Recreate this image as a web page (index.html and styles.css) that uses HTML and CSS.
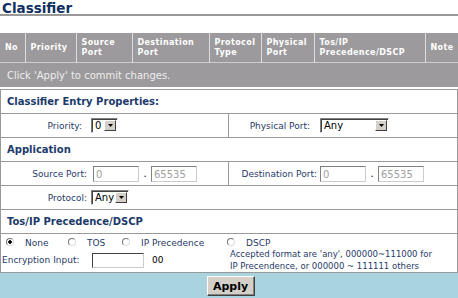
FILE: index.html
```html
<!DOCTYPE html>
<html lang="en">
<head>
    <meta charset="UTF-8">
    <title>Classifier</title>
    <link rel="stylesheet" href="styles.css">
</head>
<body>
    <h1 class="title">Classifier</h1>
    <table class="rules">
        <colgroup>
            <col style="width:25px"><col style="width:51px"><col style="width:56px"><col style="width:77px">
            <col style="width:52px"><col style="width:53px"><col style="width:111px"><col style="width:33px">
        </colgroup>
        <thead>
            <tr>
                <th>No</th>
                <th>Priority</th>
                <th>Source<br>Port</th>
                <th>Destination<br>Port</th>
                <th>Protocol<br>Type</th>
                <th>Physical<br>Port</th>
                <th>Tos/IP<br>Precedence/DSCP</th>
                <th>Note</th>
            </tr>
        </thead>
        <tbody>
            <tr><td colspan="8" class="hint">Click 'Apply' to commit changes.</td></tr>
        </tbody>
    </table>

    <div class="props">
        <div class="row head">Classifier Entry Properties:</div>
        <div class="row">
            <div class="half left">
                <span class="lbl lbl-pri">Priority:</span>
                <span class="select sel-pri"><span class="val">0</span><span class="arrow"><svg width="5" height="3" viewBox="0 0 5 3"><path d="M0 0H5L2.5 3Z" fill="#000"/></svg></span></span>
            </div>
            <div class="half">
                <span class="lbl lbl-phy">Physical Port:</span>
                <span class="select sel-phy"><span class="val">Any</span><span class="arrow"><svg width="5" height="3" viewBox="0 0 5 3"><path d="M0 0H5L2.5 3Z" fill="#000"/></svg></span></span>
            </div>
        </div>
        <div class="row head">Application</div>
        <div class="row">
            <div class="half left">
                <span class="lbl lbl-src">Source Port:</span>
                <span class="field off">0</span><span class="dot">.</span><span class="field off">65535</span>
            </div>
            <div class="half">
                <span class="lbl lbl-dst">Destination Port:</span>
                <span class="field off">0</span><span class="dot">.</span><span class="field off">65535</span>
            </div>
        </div>
        <div class="row">
            <span class="lbl lbl-proto">Protocol:</span>
            <span class="select sel-proto"><span class="val">Any</span><span class="arrow"><svg width="5" height="3" viewBox="0 0 5 3"><path d="M0 0H5L2.5 3Z" fill="#000"/></svg></span></span>
        </div>
        <div class="row head">Tos/IP Precedence/DSCP</div>
        <div class="tos">
            <div class="opts">
                <label class="opt opt-none"><input type="radio" name="tos" checked>None</label>
                <label class="opt opt-tos"><input type="radio" name="tos">TOS</label>
                <label class="opt opt-ip"><input type="radio" name="tos">IP Precedence</label>
                <label class="opt"><input type="radio" name="tos">DSCP</label>
            </div>
            <div class="enc">
                <div class="enc-left">
                    <span class="enc-lbl">Encryption Input:</span>
                    <span class="field enc-field"></span>
                    <span class="enc-suffix">00</span>
                </div>
                <div class="note">
                    <span class="note-line">Accepted format are 'any', 000000~111000 for</span>
                    <span class="note-line">IP Precendence, or 000000 ~ 111111 others</span>
                </div>
            </div>
        </div>
    </div>

    <div class="actions">
        <button class="apply">Apply</button>
    </div>
</body>
</html>
```

FILE: styles.css
```css
body {
    margin: 0;
    width: 458px;
    font-family: "DejaVu Sans", Verdana, sans-serif;
    background: #fff;
    color: #1f3a68;
}
.title {
    margin: 0 0 17px;
    padding-left: 2px;
    height: 14px;
    font-size: 13.5px;
    line-height: 16px;
    color: #10305f;
    border-bottom: 2px solid #999;
}

/* rule list */
.rules {
    width: 458px;
    border-collapse: collapse;
    table-layout: fixed;
}
.rules th {
    height: 29px;
    padding: 0 0 0 5px;
    background: #9c9a9c;
    color: #fff;
    font-size: 8px;
    line-height: 10px;
    letter-spacing: 0.4px;
    text-align: left;
    border-left: 1px solid #ddd;
    white-space: nowrap;
    overflow: hidden;
}
.rules th:first-child {
    border-left: none;
}
.rules td.hint {
    height: 24px;
    padding: 0 0 0 7px;
    background: #9c9a9c;
    color: #eee;
    font-size: 10px;
    border-top: 1px solid #ccc;
}

/* properties box */
.props {
    margin-top: 2px;
    border: 1px solid #999;
    border-bottom: none;
}
.row {
    display: flex;
    align-items: center;
    height: 23px;
    border-bottom: 1px solid #999;
    font-size: 9px;
}
.row.head {
    padding-left: 6px;
    font-size: 10px;
    font-weight: bold;
    color: #1b3a6b;
}
.half {
    display: flex;
    align-items: center;
    height: 100%;
    width: 229px;
}
.half.left {
    width: 228px;
    border-right: 1px solid #999;
}
.lbl {
    text-align: right;
    white-space: nowrap;
}
.lbl-pri { width: 81px; margin-right: 9px; }
.lbl-src { width: 86px; margin-right: 6px; }
.lbl-proto { width: 86px; margin-right: 4px; }
.lbl-phy { width: 81px; margin-right: 10px; }
.lbl-dst { width: 88px; margin-right: 3px; }

.select {
    display: inline-flex;
    align-items: stretch;
    box-sizing: border-box;
    height: 15px;
    border: 1px solid;
    border-color: #808080 #fff #fff #808080;
    box-shadow: inset 1px 1px #404040;
    background: #fff;
    color: #000;
    font-size: 10px;
}
.select .val {
    flex: 1;
    padding: 1px 0 0 3px;
    line-height: 12px;
}
.select .arrow {
    display: flex;
    align-items: center;
    justify-content: center;
    width: 12px;
    margin: 1px 1px 1px 0;
    background: #d4d0c8;
    box-sizing: border-box;
    border: 1px solid;
    border-color: #fff #404040 #404040 #fff;
}
.sel-pri { width: 27px; }
.sel-phy { width: 69px; }
.sel-proto { width: 38px; }

.field {
    display: inline-block;
    box-sizing: border-box;
    width: 46px;
    height: 16px;
    padding: 1px 0 0 2px;
    border: 1px solid;
    border-color: #808080 #ccc #ccc #808080;
    font-size: 10px;
    line-height: 13px;
    color: #000;
    background: #fff;
}
.field.off {
    color: #a0a0a0;
}
.dot {
    width: 12px;
    text-align: center;
    color: #000;
    font-size: 10px;
}

/* tos section */
.tos {
    height: 38px;
    border-bottom: 1px solid #999;
    font-size: 9px;
}
.opts {
    display: flex;
    height: 9px;
    padding: 5px 0 0 5px;
}
.opt {
    display: flex;
    align-items: center;
    line-height: 9px;
}
.opt-none { width: 62px; }
.opt-tos { width: 54px; }
.opt-ip { width: 105px; }
.opt input {
    -webkit-appearance: none;
    appearance: none;
    box-sizing: border-box;
    width: 8px;
    height: 8px;
    margin: -3px 11px 0 0;
    border: 1px solid;
    border-color: #777 #ddd #ddd #777;
    border-radius: 50%;
    background: #fff;
}
.opt input:checked {
    background: radial-gradient(circle, #000 0 1.5px, #fff 2px);
}
.enc {
    display: flex;
    height: 24px;
}
.enc-left {
    display: flex;
    flex: 0 0 228px;
    align-items: center;
    padding-left: 1px;
}
.enc-lbl {
    width: 90px;
    white-space: nowrap;
}
.enc-field {
    width: 52px;
    height: 15px;
    border-color: #404040 #ccc #ccc #404040;
}
.enc-suffix {
    margin-left: 8px;
    color: #000;
}
.note {
    display: flex;
    flex-direction: column;
    align-items: flex-start;
    flex: 1;
    font-size: 8.5px;
    line-height: 12px;
}
.note-line {
    white-space: nowrap;
    letter-spacing: 0;
}

/* footer */
.actions {
    display: flex;
    justify-content: center;
    align-items: center;
    height: 26px;
    padding-left: 3px;
    background: #a9d4df;
}
.apply {
    width: 48px;
    height: 20px;
    padding: 0;
    background: #d4d0c8;
    border: 1px solid;
    border-color: #fff #404040 #404040 #fff;
    box-shadow: inset -1px -1px #808080;
    font-family: "DejaVu Sans", Verdana, sans-serif;
    font-size: 11px;
    font-weight: bold;
    color: #000;
}
```
